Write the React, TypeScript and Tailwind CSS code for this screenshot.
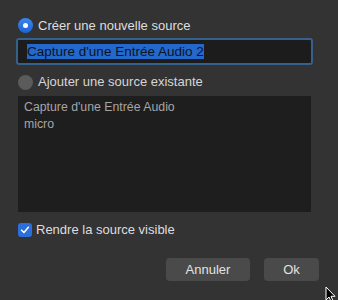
import React from 'react';

const font = { fontFamily: '"Liberation Sans", Arial, sans-serif' };

const Radio = ({ checked }: { checked: boolean }) =>
  checked ? (
    <span className="w-[15px] h-[15px] rounded-full bg-gradient-to-b from-[#3c86f0] to-[#1f62d4] flex items-center justify-center shrink-0">
      <span className="w-[5px] h-[5px] rounded-full bg-white" />
    </span>
  ) : (
    <span className="w-[15px] h-[15px] rounded-full bg-[#5b5b5b] shrink-0" />
  );

export default function App() {
  return (
    <div
      className="relative w-[338px] h-[300px] overflow-hidden bg-[#333333] text-[13px] text-[#dedede]"
      style={font}
    >
      <div className="flex flex-col pl-[18px] pr-[27px] pt-[18px]">
        {/* new source */}
        <label className="flex items-center gap-[5px] h-[15px]">
          <Radio checked />
          <span>Créer une nouvelle source</span>
        </label>

        <div className="mt-[5px] -ml-[2px] -mr-[2px] h-[27px] rounded-[3px] border-[2px] border-[#35618e] bg-[#1c1c1c] flex items-center px-[9px]">
          <span className="bg-[#2468cc] text-[#0c1420] leading-[15px] text-[13.5px]">Capture d'une Entrée Audio 2</span>
        </div>

        {/* existing source */}
        <label className="mt-[9px] flex items-center gap-[5px] h-[16px]">
          <Radio checked={false} />
          <span className="text-[#d6d6d6]">Ajouter une source existante</span>
        </label>

        <div className="mt-[6px] h-[116px] bg-[#1e1e1e] px-[6px] pt-[3px] text-[12.3px] text-[#a5a5a5] leading-[17px]">
          <div>Capture d'une Entrée Audio</div>
          <div>micro</div>
        </div>

        {/* visible */}
        <label className="mt-[10px] flex items-center gap-[4px] h-[15px]">
          <span className="w-[14px] h-[14px] rounded-[3px] bg-[#2a6fdc] flex items-center justify-center shrink-0">
            <svg viewBox="0 0 14 14" className="w-[12px] h-[12px]">
              <path d="M3 7.2 L5.8 10 L11 3.8" fill="none" stroke="white" strokeWidth="1.8" strokeLinecap="round" strokeLinejoin="round" />
            </svg>
          </span>
          <span>Rendre la source visible</span>
        </label>

        {/* buttons */}
        <div className="mt-[21px] flex justify-end gap-[14px] -mr-[8px]">
          <button className="w-[84px] h-[23px] rounded-[4px] bg-[#4a4a4a] text-[#e2e2e2] text-[13px]" style={font}>
            Annuler
          </button>
          <button className="w-[55px] h-[23px] rounded-[4px] bg-[#4a4a4a] text-[#e2e2e2] text-[13px]" style={font}>
            Ok
          </button>
        </div>
      </div>

      {/* mouse pointer */}
      <svg className="absolute left-[325px] top-[286px] w-[12px] h-[17px]" viewBox="0 0 12 17">
        <path d="M1 1 L1 14 L4 11 L6.3 16 L8.2 15.2 L6 10.3 L10 10.3 Z" fill="black" stroke="white" strokeWidth="1" strokeLinejoin="round" />
      </svg>
    </div>
  );
}
